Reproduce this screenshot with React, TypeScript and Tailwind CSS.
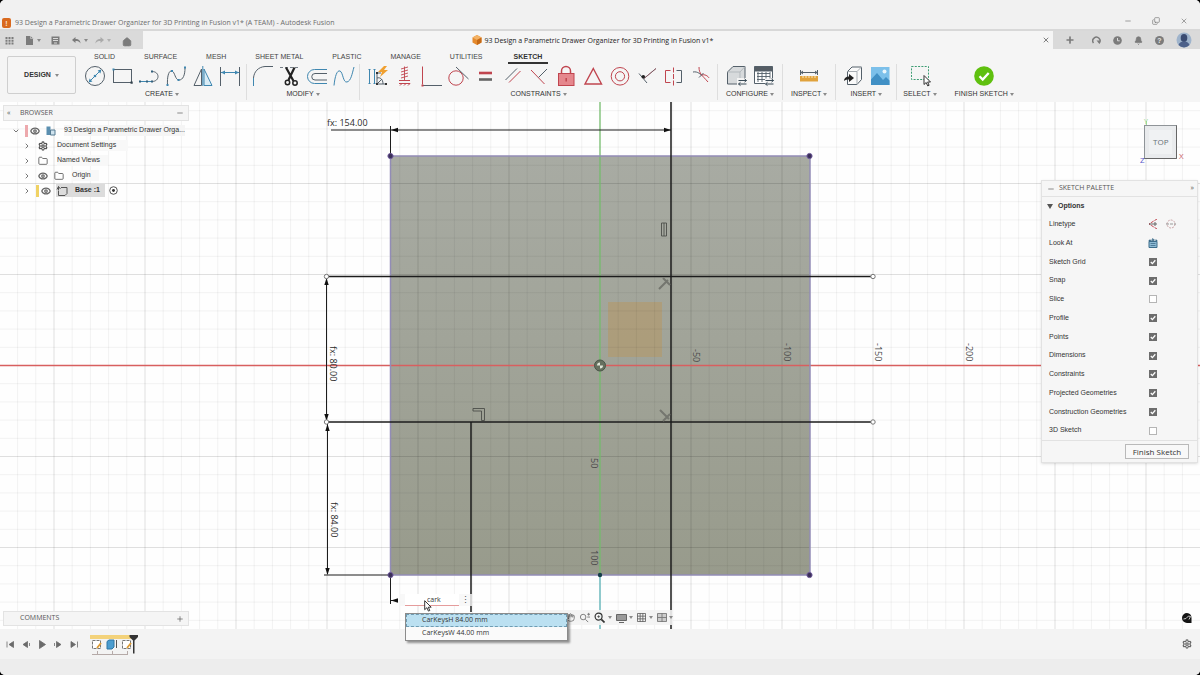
import { useState, type ReactNode } from "react";
import {
  Bell,
  ChevronDown,
  ChevronRight,
  Copy,
  Eye,
  Folder,
  Hand,
  Home,
  Minus,
  Plus,
  Settings,
  X,
} from "lucide-react";

const RED = "#c0454f";
const BLUE = "#3f87b0";
const INK = "#54606a";

function Glyph({ children }: { children: ReactNode }) {
  return (
    <svg viewBox="0 0 24 24" className="size-6 shrink-0" fill="none" stroke={INK} strokeWidth="1" aria-hidden="true">
      {children}
    </svg>
  );
}

function Caret() {
  return (
    <svg viewBox="0 0 4 3" className="h-[3px] w-1 shrink-0" aria-hidden="true">
      <path d="M0 0h4L2 3z" fill="#8a8a8a" />
    </svg>
  );
}

type Tool = { name: string; art: ReactNode };

const createTools: Tool[] = [
  {
    name: "Circle",
    art: (
      <>
        <circle cx="12" cy="12" r="9.5" />
        <path d="M7 17 17 7" stroke={BLUE} />
        <path d="M5.6 18.4 6.6 14.6 9.4 17.4zM18.4 5.6 17.4 9.4 14.6 6.6z" fill={BLUE} stroke="none" />
        <circle cx="12" cy="12" r="1.3" fill={BLUE} stroke="none" />
      </>
    ),
  },
  {
    name: "Rectangle",
    art: (
      <>
        <rect x="3.5" y="5.5" width="18" height="13" />
        <path d="M2.5 4.5h2v2h-2z" fill={BLUE} stroke="none" />
        <path d="M20.5 17.5h2.2v2.2h-2.2z" fill="#33414c" stroke="none" />
      </>
    ),
  },
  {
    name: "Tangent arc",
    art: (
      <>
        <path d="M3 17.5h12" stroke={BLUE} />
        <path d="M15 7.5c8 0 8 10 0 10" />
        <path d="M2 16.5h2v2H2zM9 16.5h2v2H9zM14 6.5h2v2h-2zM14 16.5h2v2h-2z" fill="#33607c" stroke="none" />
      </>
    ),
  },
  {
    name: "Spline",
    art: (
      <>
        <path d="M3.5 21C3 12 5 6 8 7s3 9 7 9 6-5 6-12" />
        <path d="M2.5 20h2v2h-2zM7 6h2v2H7zM13.5 15h2v2h-2zM20 2.5h2v2h-2z" fill={BLUE} stroke="none" />
      </>
    ),
  },
  {
    name: "Mirror",
    art: (
      <>
        <path d="M10.5 5v16.5H3z" />
        <path d="M13 5v16.5h8z" stroke={BLUE} fill="#d9ecf6" />
        <path d="M11.8 2v20" stroke={BLUE} />
      </>
    ),
  },
  {
    name: "Sketch dimension",
    art: (
      <>
        <path d="M2.5 3v19M21.5 3v19" />
        <path d="M3 8.5h18" stroke={BLUE} />
        <path d="m3 8.5 4-2v4zM21 8.5l-4-2v4z" fill={BLUE} stroke="none" />
      </>
    ),
  },
];

const modifyTools: Tool[] = [
  {
    name: "Fillet",
    art: (
      <>
        <path d="M2.5 14C3 8 7 3 14 2.5" />
        <path d="M2.5 14v8" stroke={BLUE} />
        <path d="M14 2.5h8" />
      </>
    ),
  },
  {
    name: "Trim",
    art: (
      <>
        <path d="M2 3.5h20" strokeDasharray="3 2" strokeWidth=".8" />
        <path d="M8 3.5 15.5 17M16.5 3.5 10.5 16" stroke="#222" strokeWidth="2.2" />
        <circle cx="9.5" cy="18.5" r="2.2" stroke="#222" strokeWidth="1.5" />
        <circle cx="17" cy="19" r="2.2" stroke="#222" strokeWidth="1.5" />
      </>
    ),
  },
  {
    name: "Offset",
    art: (
      <>
        <path d="M22 5.5H9.5a7 7 0 0 0 0 14H22" stroke={BLUE} />
        <path d="M22 9.5H10a3 3 0 0 0 0 6.5h12" />
      </>
    ),
  },
  { name: "Edit spline", art: <path d="M2 21.5C3 12 5 6 8 7s3 12 7 11 5-8 7-15" stroke={BLUE} /> },
];

const constraintTools: Tool[] = [
  {
    name: "Auto constrain",
    art: (
      <>
        <path d="M4.5 5v15M9.5 5v15M3.5 5.5h2M3.5 19.5h2M8.5 5.5h2M8.5 19.5h2" stroke={BLUE} />
        <path d="M12 20V9h4M12 14c3-1 6 1 6 6H12l5-5M18 20h4" />
        <path d="M11 8h2v2h-2zM11 19h2v2h-2zM20 19h2v2h-2z" fill="#333" stroke="none" />
        <path d="m19 2-6 6h4l-2 5 8-7h-4l3-4z" fill="#f0a030" stroke="none" />
      </>
    ),
  },
  {
    name: "Horizontal / Vertical",
    art: (
      <>
        <path d="M12.5 2.5V16M9 5l7-2M9 8l7-2M9 11l7-2M9 14l7-2" stroke={RED} strokeWidth=".9" />
        <path d="M7 16.5h11" stroke={RED} />
        <path d="M7 19.5h11M8 21.5l2-2M12 21.5l2-2M16 21.5l2-2" stroke={RED} />
      </>
    ),
  },
  {
    name: "Perpendicular corner",
    art: (
      <>
        <path d="M3.5 2.5v18" stroke={RED} />
        <path d="M3.5 21.5H23" />
        <path d="M2.5 20.5h2v2h-2z" fill={RED} stroke="none" />
      </>
    ),
  },
  {
    name: "Tangent",
    art: (
      <>
        <circle cx="10" cy="14" r="7.2" stroke={RED} />
        <path d="m10 3 12.5 12" />
      </>
    ),
  },
  {
    name: "Equal",
    art: (
      <>
        <path d="M6 9h13" stroke={RED} strokeWidth="2.6" />
        <path d="M6 15.5h13" stroke="#666" strokeWidth="2.6" />
      </>
    ),
  },
  {
    name: "Parallel",
    art: (
      <>
        <path d="M5.5 16 17 4.5" />
        <path d="M9 18.5 20.5 7" stroke={RED} />
      </>
    ),
  },
  {
    name: "Perpendicular",
    art: (
      <>
        <path d="m4 6 13.5 14" stroke={RED} />
        <path d="M20 5 11.5 13.5" />
      </>
    ),
  },
  {
    name: "Fix",
    art: (
      <>
        <path d="M7.5 10V7a4.5 4.5 0 0 1 9 0v3" stroke={RED} strokeWidth="1.5" />
        <rect x="4.5" y="9.5" width="15.5" height="12" fill="#e5878d" stroke={RED} />
        <path d="M12.2 14v3.5" stroke={RED} strokeWidth="1.5" />
      </>
    ),
  },
  { name: "Midpoint", art: <path d="M12.3 4.5 20.5 20H4z" stroke={RED} strokeWidth="1.4" /> },
  {
    name: "Concentric",
    art: (
      <>
        <circle cx="12" cy="12.3" r="8.8" stroke={RED} />
        <circle cx="12" cy="12.3" r="4.6" stroke={RED} />
      </>
    ),
  },
  {
    name: "Coincident",
    art: (
      <>
        <path d="M4 9.5 12 19" />
        <path d="M9 14.5 21 4.5" stroke={RED} strokeWidth=".9" />
        <path d="M9 14.5 21 4.5" strokeWidth=".7" />
        <circle cx="8.3" cy="12.8" r="1.8" fill="#222" stroke="none" />
      </>
    ),
  },
  {
    name: "Symmetry",
    art: (
      <>
        <path d="M8.5 6.5h-5v12h5" stroke={RED} />
        <path d="M14.5 6.5h5v12h-5" />
        <path d="M11.5 3.5v18" stroke={RED} strokeDasharray="5 1.5" />
      </>
    ),
  },
  {
    name: "Curvature",
    art: (
      <>
        <path d="M4 8c5-1 8 3 8 3" />
        <path d="M10 3c0 7 3 8 9 15" stroke={RED} />
        <path d="M12 11c4-1 7 1 8 3" stroke={RED} />
        <path d="M10 13.5 14.5 9" />
      </>
    ),
  },
];

const swap = <path d="M13.5 16.5h8M13.5 20h8M19.5 14.8l2 1.7-2 1.6M15.5 18.3l-2 1.7 2 1.6" stroke="#3a4b57" />;

const configureTools: Tool[] = [
  {
    name: "Configure model",
    art: (
      <>
        <path d="M2.5 8 8 2.5h12v12L15 20H2.5z" fill="#d7dadc" />
        <path d="M2.5 8H15v12M15 8l5-5.5" stroke="#b3b9bd" />
        <path d="M12 14h11v9H12z" fill="#f4f4f4" stroke="none" />
        {swap}
      </>
    ),
  },
  {
    name: "Configuration table",
    art: (
      <>
        <path d="M2.5 3.5h18v16h-18z" fill="#fff" />
        <path d="M2.5 2.5h18V7h-18z" fill="#555d64" />
        <path d="M5 9.5h13M5 12.5h13M5 15.5h13M6 8v10M10 8v10M14 8v10M18 8v10" strokeWidth=".9" />
        <path d="M13 14.5h10v8H13z" fill="#f4f4f4" stroke="none" />
        {swap}
      </>
    ),
  },
];

const inspectTools: Tool[] = [
  {
    name: "Measure",
    art: (
      <>
        <path d="M3.5 6v5M20.5 6v5M4 8.5h16M6 7 4 8.5 6 10M18 7l2 1.5-2 1.5" />
        <path d="M3 12h18v5.5H3z" fill="#e0a23c" stroke="none" />
        <path d="M6 12v2M9 12v2M12 12v2M15 12v2M18 12v2" stroke="#fbe6bd" />
      </>
    ),
  },
];

const insertTools: Tool[] = [
  {
    name: "Insert component",
    art: (
      <>
        <path d="M6.5 7.5 11 3h9.5v12.5L16 20.5H6.5z" fill="#fafafa" />
        <path d="M6.5 7.5H16v13M16 7.5 20.5 3" stroke="#a7adb2" />
        <path d="M3 17c0-3 2-4.5 5-4.5V10l5 4-5 4v-2.5c-2 0-3.5.3-5 1.5z" fill="#222" stroke="none" />
      </>
    ),
  },
  {
    name: "Insert image",
    art: (
      <>
        <path d="M3 3h18.5v18H3z" fill="#7cc0ea" stroke="none" />
        <path d="M3 15.5 9 9l6 7 3-3 3.5 3.5V21H3z" fill="#4190c5" stroke="none" />
        <circle cx="16.5" cy="7.5" r="2" fill="#e9f6fd" stroke="none" />
      </>
    ),
  },
];

const cursorPath = "M0 0v9l2.2-2 1.5 3.4 1.4-.6-1.5-3.3H6.5z";

const selectTools: Tool[] = [
  {
    name: "Window selection",
    art: (
      <>
        <rect x="3.5" y="2.5" width="17" height="13" stroke="#3e9d74" strokeDasharray="2 1.3" />
        <path d={cursorPath} transform="translate(16 11.5)" fill="#fff" stroke="#333" />
      </>
    ),
  },
];

const finishTools: Tool[] = [
  {
    name: "Finish",
    art: (
      <>
        <circle cx="12" cy="12" r="9.8" fill="#5fc00f" stroke="none" />
        <path d="m7.5 12.3 3.2 3.2 6-6.5" stroke="#fff" strokeWidth="2.3" />
      </>
    ),
  },
];

function RibbonGroup({ label, tools, pad, last }: { label: string; tools: Tool[]; pad: string; last?: boolean }) {
  return (
    <section aria-label={label} className={`flex flex-col items-center ${pad} ${last ? "" : "border-r border-[#dedede]"}`}>
      <div className="flex">
        {tools.map((t) => (
          <button key={t.name} type="button" aria-label={t.name} className="flex h-6 w-[27px] items-center justify-center">
            <Glyph>{t.art}</Glyph>
          </button>
        ))}
      </div>
      <button type="button" className="flex h-3 items-center gap-0.5 text-[7px] leading-3 whitespace-nowrap text-[#333]">
        {label}
        <Caret />
      </button>
    </section>
  );
}

const tabs = ["SOLID", "SURFACE", "MESH", "SHEET METAL", "PLASTIC", "MANAGE", "UTILITIES", "SKETCH"];

function QuickIcon({ children }: { children: ReactNode }) {
  return (
    <svg viewBox="0 0 9 9" className="size-[9px]" fill="#7b7b7b" aria-hidden="true">
      {children}
    </svg>
  );
}

function Header() {
  return (
    <header>
      <div className="flex h-[29px] items-end justify-between bg-[#f1f1f1]">
        <div className="flex items-center gap-1 pl-[2px]">
          <span className="flex h-[10px] w-[9px] items-center justify-center rounded-[2px] bg-[#d9691e] text-[7px] leading-none font-bold text-[#fbe3cf]">!</span>
          <h1 className="font-['Open_Sans'] text-[7px] leading-3 text-[#6c6c6c]">
            93 Design a Parametric Drawer Organizer for 3D Printing in Fusion v1* (A TEAM) - Autodesk Fusion
          </h1>
        </div>
        <div className="flex gap-[20px] pr-3 pb-1 text-[#777]">
          <button type="button" aria-label="Minimize"><Minus size={8} /></button>
          <button type="button" aria-label="Restore"><Copy size={8} className="-scale-y-100" /></button>
          <button type="button" aria-label="Close window"><X size={8} /></button>
        </div>
      </div>
      <div className="flex h-5 border-t-2 border-[#d8d8d8] bg-[#dadada] text-[#7b7b7b]">
        <div className="flex w-[143px] items-center pl-[5px]">
          <button type="button" aria-label="Data panel" className="w-[20px]">
            <QuickIcon><path d="M.5 1h2v2h-2zM3.5 1h2v2h-2zM6.5 1h2v2h-2zM.5 3.7h2v2h-2zM3.5 3.7h2v2h-2zM6.5 3.7h2v2h-2zM.5 6.4h2v2h-2zM3.5 6.4h2v2h-2zM6.5 6.4h2v2h-2z" /></QuickIcon>
          </button>
          <button type="button" aria-label="File" className="flex w-[26px] items-center gap-[3px]">
            <QuickIcon><path d="M1 0h4.5L8 2.5V9H1z" /><path d="M5.5 0v2.5H8" stroke="#dadada" strokeWidth=".6" fill="none" /></QuickIcon>
            <Caret />
          </button>
          <button type="button" aria-label="Save" className="w-[21px]">
            <QuickIcon><path d="M.5.5h8v8h-8z" /><path d="M2 2.5h5M2 4.5h5M3 7h3" stroke="#dadada" /></QuickIcon>
          </button>
          <button type="button" aria-label="Undo" className="flex w-[23px] items-center gap-[3px]">
            <QuickIcon><path d="M0 4 3.5 1v2C7 3 8.5 5 8.5 7.5 7.5 5.5 6 5 3.5 5v2z" /></QuickIcon>
            <Caret />
          </button>
          <button type="button" aria-label="Redo" className="flex w-[27px] items-center gap-[3px] opacity-50">
            <QuickIcon><path d="M9 4 5.5 1v2C2 3 .5 5 .5 7.5 1.5 5.5 3 5 5.5 5v2z" /></QuickIcon>
            <Caret />
          </button>
          <button type="button" aria-label="Home" className="pt-[3px]"><Home size={10} fill="#7b7b7b" /></button>
        </div>
        <div className="flex flex-1 items-center bg-[#f5f5f5] pr-[3px] text-[#444]">
          <div className="flex flex-1 items-center justify-center gap-[3px]">
            <svg viewBox="0 0 10 10" className="size-[10px]" aria-hidden="true">
              <path d="M5 0 9.5 2.5v5L5 10 .5 7.5v-5z" fill="#e58a2c" />
              <path d="M5 0 9.5 2.5 5 5 .5 2.5z" fill="#f3b265" />
              <path d="M5 5v5L9.5 7.5v-5z" fill="#c66a16" />
            </svg>
            <span className="pt-[1px] font-['Open_Sans'] text-[7px] leading-3 text-[#222]">93 Design a Parametric Drawer Organizer for 3D Printing in Fusion v1*</span>
          </div>
          <button type="button" aria-label="Close tab"><X size={8} /></button>
        </div>
        <div className="flex w-[147px] items-center justify-between pr-2 pl-3">
          <button type="button" aria-label="New tab"><Plus size={10} strokeWidth={4} /></button>
          <div className="flex items-center gap-3">
            <button type="button" aria-label="Extensions">
              <QuickIcon><path d="M1.5 7A3.6 3.6 0 1 1 7 7.3" fill="none" stroke="#7b7b7b" strokeWidth="1.5" /><path d="M4.5 4.5H8L7.5 8z" /></QuickIcon>
            </button>
            <button type="button" aria-label="Job status">
              <QuickIcon><circle cx="4.5" cy="4.5" r="4.3" /><path d="M4.5 2v2.8h2.2" stroke="#dadada" fill="none" /></QuickIcon>
            </button>
            <button type="button" aria-label="Notifications"><Bell size={9} fill="#7b7b7b" /></button>
            <button type="button" aria-label="Help" className="flex size-[9px] items-center justify-center rounded-full bg-[#7b7b7b] text-[7px] leading-none font-bold text-[#e6e6e6]">?</button>
            <button type="button" aria-label="Account">
              <svg viewBox="0 0 16 16" className="size-4" aria-hidden="true">
                <circle cx="8" cy="8" r="7.5" fill="#9fb4cc" />
                <ellipse cx="8" cy="6" rx="3.3" ry="4" fill="#3b4c72" />
                <path d="M2.5 13c1-3 3-3.5 5.5-3.5s4.5.5 5.5 3.5A7.5 7.5 0 0 1 8 15.5 7.5 7.5 0 0 1 2.5 13z" fill="#4d618a" />
              </svg>
            </button>
          </div>
        </div>
      </div>
      <div className="flex h-[53px] bg-[#f5f5f5] pl-[7px]">
        <button type="button" className="mt-[7px] flex h-[38px] w-[69px] items-center justify-center gap-1 rounded-[2px] border border-[#cfcfcf] text-[7px] font-bold text-[#333]">
          DESIGN
          <Caret />
        </button>
        <div className="flex flex-col pl-[2px]">
          <nav className="flex h-[15px] gap-[21px] pl-[12px]">
            {tabs.map((t) => (
              <a
                key={t}
                href={`#${t.toLowerCase().replace(" ", "-")}`}
                className={
                  t === "SKETCH"
                    ? "border-b-2 border-[#333] px-[6px] pt-[2px] text-[7px] leading-[11px] font-bold text-[#333]"
                    : "px-1 pt-[2px] text-[7px] leading-[11px] whitespace-nowrap text-[#444]"
                }
              >
                {t}
              </a>
            ))}
          </nav>
          <div className="flex">
            <RibbonGroup label="CREATE" tools={createTools} pad="px-[3px]" />
            <RibbonGroup label="MODIFY" tools={modifyTools} pad="px-[2px]" />
            <RibbonGroup label="CONSTRAINTS" tools={constraintTools} pad="px-[3px]" />
            <RibbonGroup label="CONFIGURE" tools={configureTools} pad="px-[5px]" />
            <RibbonGroup label="INSPECT" tools={inspectTools} pad="px-2" />
            <RibbonGroup label="INSERT" tools={insertTools} pad="px-[3px]" />
            <RibbonGroup label="SELECT" tools={selectTools} pad="pr-2 pl-[6px]" last />
            <RibbonGroup label="FINISH SKETCH" tools={finishTools} pad="px-[10px]" last />
          </div>
        </div>
      </div>
    </header>
  );
}

const CX = 600;
const CY = 365.5;
const STEP = 18.2;
const steps = Array.from({ length: 81 }, (_, i) => i - 40);

function Arrow({ x, y, turn }: { x: number; y: number; turn: number }) {
  return <path d="M0 0 7-2.2v4.4z" transform={`translate(${x} ${y}) rotate(${turn})`} fill="#111" />;
}

function Drawing() {
  return (
    <svg viewBox="0 102 1200 527" preserveAspectRatio="xMidYMid slice" className="absolute inset-0 h-full w-full font-['Open_Sans']" aria-label="Sketch canvas">
      <defs>
        <linearGradient id="face" x1="0" y1="0" x2="0" y2="1">
          <stop offset="0" stopColor="#a8aba3" />
          <stop offset="1" stopColor="#989b8c" />
        </linearGradient>
      </defs>
      <rect x="-400" y="-200" width="2000" height="1200" fill="#fefefe" />
      <rect x="391" y="156" width="419" height="419" fill="url(#face)" />
      <rect x="608" y="302" width="54" height="55" fill="#b09b72" opacity=".75" />
      <g stroke="#000">
        {steps.filter((n) => n !== 0).map((n) => (
          <g key={n} strokeOpacity={n % 5 === 0 ? 0.12 : 0.05}>
            <path d={`M${CX + n * STEP} -200V1000`} />
            <path d={`M-400 ${CY + n * STEP}H1600`} />
          </g>
        ))}
      </g>
      <path d="M-400 365.5H1600" stroke="#d85f5f" strokeWidth="1.3" />
      <path d="M600 100V575" stroke="#74bb6c" strokeWidth="1.3" />
      <path d="M600 575V629" stroke="#6bb9bd" strokeWidth="1.5" />
      <rect x="390.5" y="156" width="419.5" height="419" fill="none" stroke="#928cb6" strokeWidth="1.5" />

      <g stroke="#1c1c1c" fill="none">
        <path d="M671 102V629M327 276.5H873M327 422H873M471 422V612" strokeWidth="1.5" />
        <path d="M331 130H671M390.5 126V156M326.5 277V421M327.5 423V574M324 575H390M390.5 575V604M391 600.5H397" />
      </g>
      <Arrow x={391} y={130} turn={0} />
      <Arrow x={671} y={130} turn={180} />
      <Arrow x={326.5} y={278} turn={90} />
      <Arrow x={326.5} y={421} turn={270} />
      <Arrow x={327.5} y={424} turn={90} />
      <Arrow x={327.5} y={575} turn={270} />
      <Arrow x={391} y={600.5} turn={0} />

      <g fill="#fff" stroke="#777">
        <circle cx="326.5" cy="276.5" r="2.2" />
        <circle cx="873" cy="276.5" r="2.2" />
        <circle cx="326.5" cy="422" r="2.2" />
        <circle cx="873" cy="422" r="2.2" />
      </g>
      <g fill="#3a2f58" stroke="#6f5a9a">
        <circle cx="390.5" cy="156" r="2.6" />
        <circle cx="809.5" cy="156" r="2.6" />
        <circle cx="390.5" cy="575" r="2.6" />
        <circle cx="809.5" cy="575" r="2.6" />
      </g>
      <circle cx="600" cy="575" r="2.2" fill="#173f4a" />
      <circle cx="600" cy="365.5" r="5.5" fill="#66705f" stroke="#4a5648" />
      <path d="M600 362.5a3 3 0 0 0-3 3h3zM600 368.5a3 3 0 0 0 3-3h-3z" fill="#dfe6d8" />

      <g fill="none" stroke="#4c4e49" strokeWidth=".9">
        <path d="M661.5 223h5v13h-5zM664 223v13" />
        <path d="M473 408.5h11.5v12h-3v-9.5H473z" />
      </g>
      <g fill="none" stroke="#74766f" strokeWidth="2">
        <path d="m659 289 9-9M663 278l7 7M660 410l9 9M663 421l7-7" />
      </g>

      <g fill="#2b2b2b" fontSize="9">
        <text x="327" y="126">fx: 154.00</text>
        <text transform="translate(330 346) rotate(90)">fx: 80.00</text>
        <text transform="translate(331 502) rotate(90)">fx: 84.00</text>
      </g>
      <g fill="#4a4a4a" fontSize="9">
        <text transform="translate(693 349) rotate(90)">-50</text>
        <text transform="translate(784 343) rotate(90)">-100</text>
        <text transform="translate(875 343) rotate(90)">-150</text>
        <text transform="translate(966 343) rotate(90)">-200</text>
        <text transform="translate(591 458) rotate(90)">50</text>
        <text transform="translate(591 550) rotate(90)">100</text>
      </g>
    </svg>
  );
}

function ComponentIcon() {
  return (
    <svg viewBox="0 0 12 12" className="size-3" fill="none" stroke="#555" aria-hidden="true">
      <path d="M5 2.5h6v6L9 10.5H2.5V6" />
      <path d="M1 4.5 2.5 1.5 4.5 4M2.5 1.5v4" />
    </svg>
  );
}

function Browser() {
  const row = "flex h-[15px] items-center";
  return (
    <aside aria-label="Browser" className="absolute top-[3px] left-[3px] w-[186px] text-[7px] text-[#333]">
      <div className="flex h-4 items-center border border-[#e3e3e3] bg-[#f5f5f5] pr-1 pl-[3px] font-['Open_Sans'] text-[#555]">
        <button type="button" aria-label="Collapse browser" className="w-[13px] text-left">«</button>
        <h2 className="flex-1">BROWSER</h2>
        <button type="button" aria-label="Minimize browser"><Minus size={8} /></button>
      </div>
      <ul className="pt-[2px]">
        <li className={`${row} pl-[9px]`}>
          <ChevronDown size={8} className="mr-[5px]" />
          <span className="mr-[2px] h-3 w-[3px] bg-[#eda9ad]" />
          <Eye size={10} strokeWidth={3} className="mr-[6px] text-[#666]" />
          <svg viewBox="0 0 10 10" className="mr-[8px] size-[10px]" aria-hidden="true">
            <path d="M.5.5h4V9h-4z" fill="#5b8fb0" />
            <path d="M4.5 4h4.5v5H4.5z" fill="#cfe3ee" stroke="#557b92" />
          </svg>
          <span className="truncate bg-[#f5f5f5]">93 Design a Parametric Drawer Orga...</span>
        </li>
        <li className={`${row} pl-5`}>
          <ChevronRight size={8} className="mr-[7px]" />
          <Settings size={10} strokeWidth={3} className="mr-[9px] text-[#555]" />
          <span className="bg-[#f8f8f8] pr-3">Document Settings</span>
        </li>
        <li className={`${row} pl-5`}>
          <ChevronRight size={8} className="mr-[7px]" />
          <Folder size={10} className="mr-[9px] text-[#555]" />
          <span className="bg-[#f8f8f8] pr-2">Named Views</span>
        </li>
        <li className={`${row} pl-5`}>
          <ChevronRight size={8} className="mr-[7px]" />
          <Eye size={10} strokeWidth={3} className="mr-[6px] text-[#666]" />
          <Folder size={10} className="mr-[8px] text-[#555]" />
          <span className="bg-[#f8f8f8] pr-2">Origin</span>
        </li>
        <li className={`${row} pl-5`}>
          <ChevronRight size={8} className="mr-[5px]" />
          <span className="mr-[2px] h-3 w-[3px] bg-[#f0d264]" />
          <Eye size={10} strokeWidth={3} className="mr-[5px] text-[#666]" />
          <span className="flex h-[13px] items-center gap-[7px] bg-[#dcdcdc] pr-[5px] font-bold">
            <ComponentIcon />
            Base :1
          </span>
          <svg viewBox="0 0 10 10" className="ml-1 size-[9px]" aria-hidden="true">
            <circle cx="5" cy="5" r="4.2" fill="#fff" stroke="#444" />
            <circle cx="5" cy="5" r="1.6" fill="#333" />
          </svg>
        </li>
      </ul>
    </aside>
  );
}

function ViewCube() {
  return (
    <div className="absolute top-[14px] right-[14px] w-[48px] font-['Open_Sans'] text-[7px]">
      <svg viewBox="0 0 48 52" className="h-[52px] w-[48px]" aria-label="View cube">
        <path d="M8.5 5v5" stroke="#a5dd9f" />
        <text x="6" y="8" fontSize="7" fill="#8fd988">Y</text>
        <rect x="6.5" y="9.5" width="32" height="33" fill="#e9ebed" stroke="#8f9498" />
        <rect x="11" y="14" width="23" height="24" fill="#f0f2f3" />
        <path d="M6.5 42.5h32v-33" stroke="#666" fill="none" />
        <text x="15" y="29" fontSize="8" fill="#667077">TOP</text>
        <text x="2" y="47" fontSize="8" fill="#5656c9">Z</text>
        <text x="41" y="43" fontSize="8" fill="#c9606c">X</text>
      </svg>
    </div>
  );
}

const options: [string, boolean][] = [
  ["Sketch Grid", true],
  ["Snap", true],
  ["Slice", false],
  ["Profile", true],
  ["Points", true],
  ["Dimensions", true],
  ["Constraints", true],
  ["Projected Geometries", true],
  ["Construction Geometries", true],
  ["3D Sketch", false],
];

function OptionRow({ label, initial }: { label: string; initial: boolean }) {
  const [on, setOn] = useState(initial);
  return (
    <label className="flex items-center">
      <span className="w-[100px]">{label}</span>
      <span className="relative flex size-2">
        <input
          type="checkbox"
          checked={on}
          onChange={() => setOn(!on)}
          className="size-2 appearance-none border border-[#b5b5b5] bg-white checked:border-[#6d6d6d] checked:bg-[#6d6d6d]"
        />
        {on && (
          <svg viewBox="0 0 8 8" className="pointer-events-none absolute inset-0 size-2" fill="none" stroke="#fff" strokeWidth="1.3" aria-hidden="true">
            <path d="m1.8 4 1.6 1.6L6.3 2.3" />
          </svg>
        )}
      </span>
    </label>
  );
}

function Palette() {
  return (
    <aside aria-label="Sketch palette" className="absolute top-[78px] right-[2px] w-[157px] border border-[#e2e2e2] bg-[#f6f6f6] text-[7px] text-[#333] shadow-sm">
      <div className="flex h-4 items-center border-b border-[#e2e2e2] pr-[3px] pl-[5px] font-['Open_Sans'] text-[#555]">
        <button type="button" aria-label="Minimize palette" className="w-[12px]"><Minus size={8} /></button>
        <h2 className="flex-1">SKETCH PALETTE</h2>
        <button type="button" aria-label="Expand palette">»</button>
      </div>
      <h3 className="flex h-[18px] items-center gap-[5px] pl-[5px] font-bold">
        <svg viewBox="0 0 6 5" className="h-[5px] w-[6px]" aria-hidden="true"><path d="M0 0h6L3 5z" fill="#555" /></svg>
        Options
      </h3>
      <div className="grid h-[225px] auto-rows-fr pl-[7px]">
        <div className="flex items-center">
          <span className="w-[98px]">Linetype</span>
          <button type="button" aria-label="Construction" className="mr-[7px]">
            <svg viewBox="0 0 12 10" className="h-[10px] w-3" fill="none" stroke={RED} aria-hidden="true">
              <path d="M10 0 2 5l8 5" strokeDasharray="3 1" />
              <path d="M2 5h8M8 3v4" stroke="#666" />
            </svg>
          </button>
          <button type="button" aria-label="Centerline">
            <svg viewBox="0 0 10 10" className="size-[10px]" fill="none" stroke="#c9a3a6" aria-hidden="true">
              <circle cx="5" cy="5" r="4" strokeDasharray="2 1" />
              <path d="M0 5h10" strokeDasharray="3 1" stroke="#999" />
            </svg>
          </button>
        </div>
        <div className="flex items-center">
          <span className="w-[99px]">Look At</span>
          <button type="button" aria-label="Look at">
            <svg viewBox="0 0 10 10" className="size-[10px]" aria-hidden="true">
              <path d="M1 3.5h8V9.5H1z" fill="#8fbcd6" stroke="#3d6c8a" />
              <path d="M1 3.5V2h3.5M4.5.5v3l2-1.5zM7 2h2v1.5" fill="#3d6c8a" stroke="#3d6c8a" strokeWidth=".6" />
              <path d="M2.5 5.5h5M2.5 7.5h5" stroke="#3d6c8a" strokeWidth=".8" />
            </svg>
          </button>
        </div>
        {options.map(([label, on]) => (
          <OptionRow key={label} label={label} initial={on} />
        ))}
      </div>
      <div className="flex h-[22px] items-center justify-end border-t border-[#e2e2e2] pr-2">
        <button type="button" className="h-[15px] w-[64px] border border-[#b9b9b9] bg-[#f8f8f8] font-['Open_Sans'] text-[8px] leading-none">Finish Sketch</button>
      </div>
    </aside>
  );
}

function ViewBar() {
  return (
    <div className="absolute bottom-1 left-1/2 -ml-[72px] flex h-[15px] w-[145px] items-center justify-end gap-1 bg-[#f3f3f3]/90 text-[#666]">
      <button type="button" aria-label="Pan"><Hand size={9} /></button>
      <button type="button" aria-label="Zoom">
        <svg viewBox="0 0 12 12" className="size-[11px]" fill="none" stroke="#777" aria-hidden="true">
          <circle cx="4.5" cy="5.5" r="3" />
          <path d="m7 8 3 3M9 2.5h3M10.5 1v3M9 5.5h3" />
        </svg>
      </button>
      <button type="button" aria-label="Fit" className="flex items-center gap-[3px]">
        <svg viewBox="0 0 12 12" className="size-[11px]" fill="none" stroke="#333" aria-hidden="true">
          <circle cx="5" cy="5" r="3.8" strokeWidth="1.3" />
          <path d="m8 8 3.5 3.5" strokeWidth="1.8" />
          <path d="M3.5 5h3M5 3.5v3" strokeWidth=".7" />
        </svg>
        <Caret />
      </button>
      <button type="button" aria-label="Display settings" className="flex items-center gap-[2px]">
        <svg viewBox="0 0 11 10" className="h-[10px] w-[11px]" fill="#999" stroke="#666" aria-hidden="true">
          <path d="M.5 1.5h10v6H.5zM3 9.5h5" />
        </svg>
        <Caret />
      </button>
      <button type="button" aria-label="Grid and snaps" className="flex items-center gap-[3px]">
        <svg viewBox="0 0 10 10" className="size-[9px]" fill="none" stroke="#666" aria-hidden="true">
          <path d="M.5.5h9v9h-9zM3.5 0v10M6.5 0v10M0 3.5h10M0 6.5h10" />
        </svg>
        <Caret />
      </button>
      <button type="button" aria-label="Viewports" className="flex items-center gap-[2px]">
        <svg viewBox="0 0 11 10" className="h-[9px] w-[10px]" fill="#ccc" stroke="#777" aria-hidden="true">
          <path d="M.5.5h10v9H.5zM5.5 0v10M0 5h11" />
        </svg>
        <Caret />
      </button>
    </div>
  );
}

function DimensionEntry() {
  const [value, setValue] = useState("cark");
  return (
    <div className="absolute bottom-[-12px] left-1/2 z-10 -ml-[195px] w-[163px] font-['Open_Sans'] text-[7px] text-[#333]">
      <div className="-ml-[6px] mb-[7px] flex w-[73px] items-center justify-between bg-[#f6f6f6]/80">
        <span className="w-[6px]" />
        <input
          aria-label="Dimension value"
          value={value}
          onChange={(e) => setValue(e.target.value)}
          className="h-3 w-[54px] border-b border-[#e59c9c] bg-white pl-[22px] outline-none"
        />
        <button type="button" aria-label="More options" className="w-[13px] text-[9px] leading-3 text-[#555]">⋮</button>
      </div>
      <svg viewBox="0 0 8 12" className="absolute top-[6px] left-[19px] h-3 w-2" aria-hidden="true">
        <path d={cursorPath} transform="translate(.7 .7)" fill="#fff" stroke="#222" strokeWidth=".9" />
      </svg>
      <ul role="listbox" aria-label="Parameters" className="border border-[#8b8b8b] bg-[#fafafa] shadow-[2px_2px_2px_#0006]">
        <li role="option" aria-selected="true" className="flex h-[13px] items-center border border-dashed border-[#6f9cb2] bg-[#bbe0f1] pl-[15px]">CarKeysH 84.00 mm</li>
        <li role="option" aria-selected="false" className="flex h-[13px] items-center pl-4">CarKeysW 44.00 mm</li>
      </ul>
    </div>
  );
}

function Timeline() {
  return (
    <footer className="bg-[#ededed]">
      <div className="flex h-[30px] items-center bg-[#f3f3f3] pr-2 pl-[5px]">
        <div className="flex gap-1 text-[#6b6b6b]">
          {[
            ["To start", "M2 2.5v6M8.5 2.5 4 5.5l4.5 3z"],
            ["Step back", "M6.5 2.5 2 5.5l4.5 3zM8.5 4v3"],
            ["Play", "M2.5 1.5v8l6-4z"],
            ["Step forward", "M3.5 2.5 8 5.5l-4.5 3zM1.5 4v3"],
            ["To end", "M8.5 2.5v6M2 2.5l4.5 3L2 8.5z"],
          ].map(([name, d]) => (
            <button key={name} type="button" aria-label={name} className="w-[12px]">
              <svg viewBox="0 0 11 11" className="size-[11px]" fill="currentColor" stroke="currentColor" strokeWidth=".8" aria-hidden="true">
                <path d={d} />
              </svg>
            </button>
          ))}
        </div>
        <svg viewBox="0 0 50 24" className="ml-[9px] h-6 w-[50px]" fill="none" aria-label="Timeline features">
          <path d="M0 3h41v4H0z" fill="#f3d27a" />
          <g stroke="#777">
            <path d="M2.5 8.5h8v8h-8zM32.5 8.5h8v8h-8z" strokeDasharray="3 1" fill="#fff" />
            <path d="M2 22.5h36M7.5 19v3M22.5 19v3M37.5 19v3" stroke="#b5aaa8" />
          </g>
          <path d="m7 16 4-5M37 16l4-5" stroke="#dd9b35" strokeWidth="1.8" />
          <path d="M17 9.5 19 8h5v7l-2 2h-5z" fill="#4b9dd0" stroke="#2f76a5" />
          <path d="M26.5 8v8" stroke="#555" />
          <path d="M39.5 3H48v2l-3.5 3.5v13H43v-13L39.5 5z" fill="#333" />
        </svg>
        <button type="button" aria-label="Timeline settings" className="ml-auto text-[#6b6b6b]"><Settings size={10} strokeWidth={3} /></button>
      </div>
      <div className="h-4" />
    </footer>
  );
}

export default function App() {
  return (
    <div className="flex h-screen flex-col overflow-hidden bg-black font-['Liberation_Sans',sans-serif]">
      <div className="flex flex-1 flex-col overflow-hidden rounded-[5px] bg-[#f5f5f5]">
        <Header />
        <main className="relative z-10 flex-1">
          <Drawing />
          <Browser />
          <ViewCube />
          <Palette />
          <ViewBar />
          <div className="absolute bottom-[3px] left-[3px] flex h-[15px] w-[186px] items-center justify-between border border-[#e3e3e3] bg-[#f5f5f5] pr-1 pl-4 font-['Open_Sans'] text-[7px] text-[#555]">
            COMMENTS
            <button type="button" aria-label="Add comment"><Plus size={8} /></button>
          </div>
          <button type="button" aria-label="Assistant" className="absolute right-2 bottom-[6px]">
            <svg viewBox="0 0 10 10" className="size-[10px]" aria-hidden="true">
              <path d="M5 0a5 5 0 1 0 0 10h4.5V5A5 5 0 0 0 5 0z" fill="#151515" />
              <path d="M1.5 6 4 5.5 6.5 3 8.5 3.5 7 6.5" fill="none" stroke="#ddd" strokeWidth=".9" />
            </svg>
          </button>
          <DimensionEntry />
        </main>
        <Timeline />
      </div>
    </div>
  );
}
